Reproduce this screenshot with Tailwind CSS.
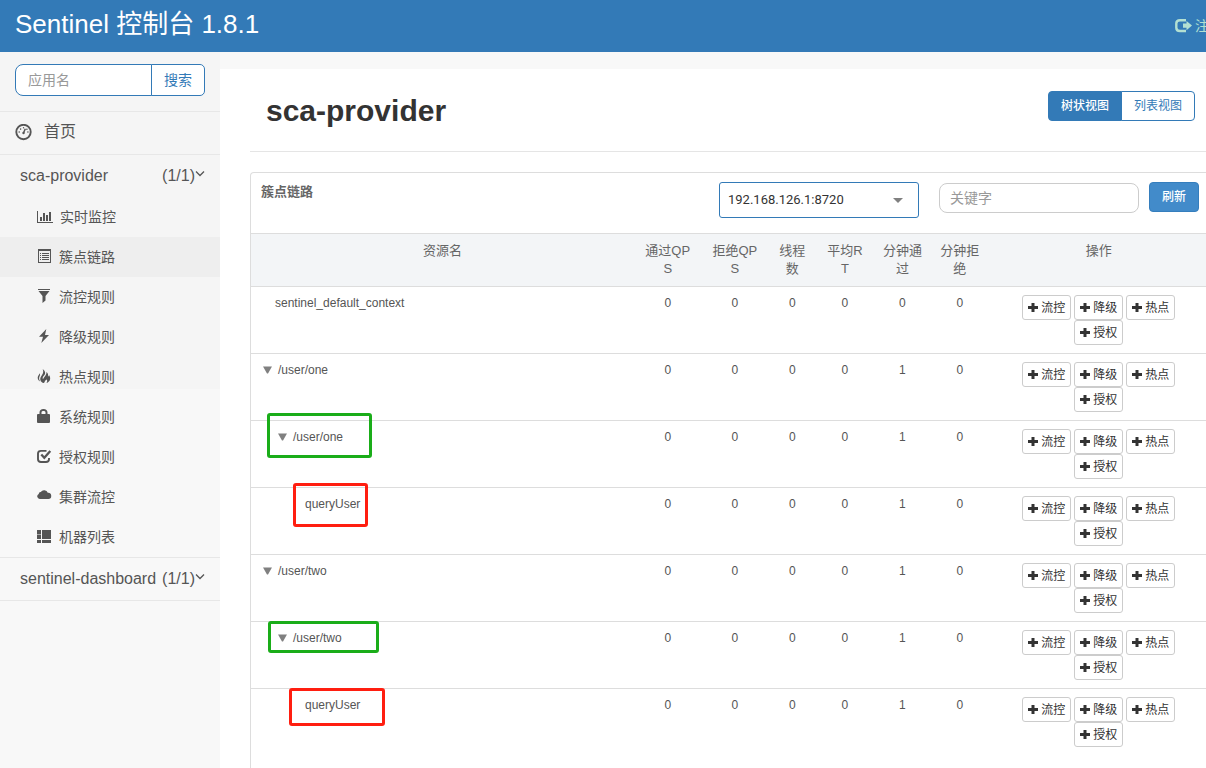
<!DOCTYPE html>
<html lang="zh-CN">
<head>
<meta charset="utf-8">
<title>Sentinel 控制台</title>
<script src="https://cdn.jsdelivr.net/npm/@tailwindcss/browser@4"></script>
</head>
<body class="bg-[#f8f8f8] font-['Liberation_Sans','Noto_Sans_CJK_SC',sans-serif] text-[#555]">
<svg class="hidden">
  <symbol id="plus" viewBox="0 0 10 12"><path d="M3.500 1h3v3H10v3H6.500v3h-3V7H0V4h3.500z" fill="currentColor"/></symbol>
  <symbol id="tri" viewBox="0 0 9 8"><path d="M0 0.500h9L5 7.500H4z" fill="currentColor"/></symbol>
  <symbol id="down" viewBox="0 0 10 10"><path d="M1 2.500l4 4 4-4" fill="none" stroke="currentColor" stroke-width="1.300"/></symbol>
</svg>
<div class="h-screen overflow-hidden">
<div class="flex min-h-full min-w-[1240px] flex-col">

  <header class="flex h-[52px] items-center justify-between bg-[#337ab7] pr-[17px] pl-[15px]">
    <a href="#" class="pb-1 text-[26px] leading-10 text-white">Sentinel 控制台 1.8.1</a>
    <a href="#" class="flex items-center gap-[3px] text-sm text-[#b3e0d2]">
      <svg class="h-4 w-[17px]" viewBox="0 0 17 16" fill="none" stroke="currentColor"><path d="M11 2.200H5Q1.300 2.200 1.300 5.500v4.200Q1.300 13 5 13h6" stroke-width="2.400"/><path d="M8 5.500h3.500V3L17 7.600l-5.500 4.700V9.700H8z" fill="currentColor" stroke="none"/></svg>
      <span>注销</span>
    </a>
  </header>

  <div class="flex flex-1">
    <aside class="w-[220px] shrink-0 bg-[linear-gradient(#f5f5f5,#f5f5f5)] bg-[length:100%_337px] bg-no-repeat">
      <form class="flex border-b border-[#e7e7e7] px-[15px] pt-3 pb-[15px]">
        <input aria-label="应用名" placeholder="应用名" class="h-8 min-w-0 flex-1 rounded-l-lg border border-[#337ab7] bg-white px-3 text-sm outline-none placeholder:text-[#999]">
        <button type="button" class="-ml-px h-8 w-[54px] rounded-r-[5px] border border-[#337ab7] bg-white text-sm text-[#337ab7]">搜索</button>
      </form>
      <nav>
        <a href="#" class="flex h-[43px] items-center gap-3 border-b border-[#e7e7e7] px-[15px] pb-0.5 text-base">
          <svg class="h-[17px] w-[17px]" viewBox="0 0 17 17" fill="none" stroke="currentColor"><circle cx="8.500" cy="8" r="7.200" stroke-width="1.900"/><path d="M8.500 9L10.300 4.800" stroke-width="1.500"/><g fill="currentColor" stroke="none"><circle cx="8.500" cy="9" r="1.200"/><circle cx="4.200" cy="8" r=".8"/><circle cx="5.600" cy="5.100" r=".8"/><circle cx="8.500" cy="3.800" r=".7"/><circle cx="11.900" cy="5.300" r=".8"/><circle cx="12.900" cy="8" r=".8"/></g></svg>
          <span>首页</span>
        </a>
        <a href="#" class="flex h-[42px] items-center pr-[15px] pl-5 text-base">
          <span class="flex-1">sca-provider</span><span>(1/1)</span>
          <svg class="mb-1 h-2.5 w-2.5"><use href="#down"/></svg>
        </a>
        <ul class="border-b border-[#e7e7e7] text-sm">
          <li><a href="#" class="flex h-10 items-center gap-1.5 pl-[37px]">
            <svg class="h-4 w-[17px]" viewBox="0 0 17 16" fill="currentColor"><path d="M0 2h1v11h15v1H0zM3 8h2v4H3zM6 4h2v8H6zM9 6h2v6H9zM12 3h2v9h-2z"/></svg>
            <span>实时监控</span></a></li>
          <li><a href="#" class="flex h-10 items-center gap-1.5 bg-[#eee] pl-[37px]">
            <svg class="h-4 w-4" viewBox="0 0 16 16" fill="currentColor"><path fill-rule="evenodd" d="M1 0h13v14H1zM2 2v11h11V2z"/><path d="M3 4h1v1H3zM5 4h7v1H5zM3 6h1v1H3zM5 6h7v1H5zM3 8h1v1H3zM5 8h7v1H5zM3 10h1v1H3zM5 10h7v1H5z"/></svg>
            <span>簇点链路</span></a></li>
          <li><a href="#" class="flex h-10 items-center gap-1.5 pl-[37px]">
            <svg class="h-4 w-4" viewBox="0 0 16 16" fill="currentColor"><path d="M1 0h12v1H1zM1.500 2h11L8.500 7v4.500L5.500 14V7z"/></svg>
            <span>流控规则</span></a></li>
          <li><a href="#" class="flex h-10 items-center gap-1.5 pl-[37px]">
            <svg class="h-4 w-4" viewBox="0 0 16 16" fill="currentColor"><path d="M9.300 0L2 7.700h4L4.300 14 12 6H8z"/></svg>
            <span>降级规则</span></a></li>
          <li><a href="#" class="flex h-10 items-center gap-1.5 pl-[37px]">
            <svg class="h-4 w-4" viewBox="0 0 16 16" fill="currentColor"><path d="M5.700 0C8.800 2.500 8.600 4.800 7 6.600 5.700 8.100 5.300 9 6 10.200c.4-.9.900-1.300 1.400-2.100 1-1.400 2.400-3 2-5.100 1.700 1.300 2 2.700 1.500 4.500.8-.3 1-.8 1-1.600C14.200 8.800 13.500 12.500 9.500 14c.8-1.300.9-2.500.2-3.800-.4.900-1 1.200-1.700 1.200 0 1-.4 1.800-1.200 2.600C3.300 13.200 2.300 9.800 4.200 7.200 5.800 5 7 3 5.700 0zM2.700 4.300c.7 1.300.2 2.300-.3 3.500C1.800 9.400 2.200 11 3.200 12.600 1 11.400.2 9.300 1 7.300 1.500 6.100 2.400 5.600 2.700 4.300z"/></svg>
            <span>热点规则</span></a></li>
          <li><a href="#" class="flex h-10 items-center gap-1.5 pl-[37px]">
            <svg class="h-4 w-4" viewBox="0 0 16 16" fill="currentColor"><path fill-rule="evenodd" d="M2.500 5V3.500C2.500 1.200 4 0 6.500 0S10.500 1.200 10.500 3.500V5H12q1 0 1 1v7q0 1-1 1H1q-1 0-1-1V6q0-1 1-1zM4.500 5h4V3.500C8.500 2.500 7.800 2 6.500 2s-2 .5-2 1.500z"/></svg>
            <span>系统规则</span></a></li>
          <li><a href="#" class="flex h-10 items-center gap-1.5 pl-[37px]">
            <svg class="h-4 w-4" viewBox="0 0 16 16" fill="none" stroke="currentColor"><path d="M9.500 1.900H4Q1 1.900 1 4.500v5.800Q1 13 4 13h5q3 0 3-2.700V9" stroke-width="1.900"/><path d="M4.300 5.500l3 3.200L13.300 2" stroke-width="2.300"/></svg>
            <span>授权规则</span></a></li>
          <li><a href="#" class="flex h-10 items-center gap-1.5 pl-[37px]">
            <svg class="h-4 w-4" viewBox="0 0 16 16" fill="currentColor"><path d="M2.700 10A2.700 2.700 0 0 1 1.700 4.900 2 2 0 0 1 3.800 3 4 4 0 0 1 10.800 3.800 3.100 3.100 0 0 1 11.400 10z"/></svg>
            <span>集群流控</span></a></li>
          <li><a href="#" class="flex h-10 items-center gap-1.5 pl-[37px]">
            <svg class="h-4 w-4" viewBox="0 0 16 16" fill="currentColor"><path d="M0 1h4v4H0zM0 5.500h4V10H0zM5 1h9v9H5zM0 11h4v3H0zM5 11h9v3H5z"/></svg>
            <span>机器列表</span></a></li>
        </ul>
        <a href="#" class="flex h-[43px] items-center border-b border-[#e7e7e7] pr-[15px] pl-5 text-base">
          <span class="flex-1">sentinel-dashboard</span><span>(1/1)</span>
          <svg class="mb-1 h-2.5 w-2.5"><use href="#down"/></svg>
        </a>
      </nav>
    </aside>

    <main class="mt-[17px] flex min-w-0 flex-1 flex-col bg-white px-[30px]">
      <div class="flex h-[83px] items-start justify-between border-b border-[#e5e5e5] pt-[22px] pr-[15px] pl-4">
        <h1 class="text-3xl leading-10 font-bold text-[#333]">sca-provider</h1>
        <div class="flex text-xs">
          <button class="h-[30px] w-[74px] rounded-l border border-[#337ab7] bg-[#337ab7] font-medium text-white">树状视图</button>
          <button class="-ml-px h-[30px] w-[74px] rounded-r border border-[#337ab7] bg-white text-[#337ab7]">列表视图</button>
        </div>
      </div>

      <section class="mt-5 flex-1 rounded-t border border-b-0 border-[#ddd]">
        <div class="flex h-[60px] items-start px-2.5 pt-[9px]">
          <h2 class="flex-1 text-[13px] leading-5 font-bold text-[#666]">簇点链路</h2>
          <div class="relative w-[200px]">
            <select aria-label="机器" class="h-9 w-full appearance-none rounded-[3px] border border-[#337ab7] bg-white px-2 font-[Roboto,sans-serif] text-[13px] text-[#333] outline-none"><option>192.168.126.1:8720</option></select>
            <svg class="pointer-events-none absolute top-4 right-4 h-[5px] w-2.5" viewBox="0 0 10 5"><path d="M0 0h10L5 5z" fill="#808080"/></svg>
          </div>
          <input aria-label="关键字" placeholder="关键字" class="mt-px ml-5 h-[30px] w-[200px] rounded-lg border border-[#ccc] px-2.5 text-sm outline-none placeholder:text-[#999]">
          <button class="ml-2.5 h-[30px] w-[50px] rounded border border-[#357ebd] bg-[#428bca] text-xs font-medium text-white">刷新</button>
        </div>

        <table class="w-full table-fixed border-t border-[#ddd] text-center text-xs text-[#555]">
          <colgroup><col class="w-[40%]"><col class="w-[7%]"><col class="w-[7%]"><col class="w-[5%]"><col class="w-[6%]"><col class="w-[6%]"><col class="w-[6%]"><col class="w-[23%]"></colgroup>
          <thead class="bg-[#f3f5f7] text-[13px] leading-[18px] break-all text-[#666]">
            <tr class="border-b border-[#ddd] align-top">
              <th class="p-2 font-normal">资源名</th><th class="p-2 font-normal">通过QPS</th><th class="p-2 font-normal">拒绝QPS</th><th class="p-2 font-normal">线程数</th><th class="p-2 font-normal">平均RT</th><th class="p-2 font-normal">分钟通过</th><th class="p-2 font-normal">分钟拒绝</th><th class="p-2 font-normal">操作</th>
            </tr>
          </thead>
          <tbody class="align-top leading-4">
            <tr class="border-b border-[#ddd]">
              <td class="py-2 pl-6 text-left">sentinel_default_context</td>
              <td class="py-2">0</td><td class="py-2">0</td><td class="py-2">0</td><td class="py-2">0</td><td class="py-2">0</td><td class="py-2">0</td>
              <td class="p-2"><div class="flex flex-wrap justify-center gap-x-[3px] text-[#333]">
                <button class="flex h-[25px] w-[49px] items-center justify-center gap-[3px] rounded-[3px] border border-[#ccc] bg-white"><svg class="h-3 w-2.5"><use href="#plus"/></svg>流控</button>
                <button class="flex h-[25px] w-[49px] items-center justify-center gap-[3px] rounded-[3px] border border-[#ccc] bg-white"><svg class="h-3 w-2.5"><use href="#plus"/></svg>降级</button>
                <button class="flex h-[25px] w-[49px] items-center justify-center gap-[3px] rounded-[3px] border border-[#ccc] bg-white"><svg class="h-3 w-2.5"><use href="#plus"/></svg>热点</button>
                <button class="flex h-[25px] w-[49px] items-center justify-center gap-[3px] rounded-[3px] border border-[#ccc] bg-white"><svg class="h-3 w-2.5"><use href="#plus"/></svg>授权</button>
              </div></td>
            </tr>
            <tr class="border-b border-[#ddd]">
              <td class="py-2 pl-3 text-left"><span class="flex items-center gap-1.5"><svg class="h-2 w-[9px] text-[#808080]"><use href="#tri"/></svg>/user/one</span></td>
              <td class="py-2">0</td><td class="py-2">0</td><td class="py-2">0</td><td class="py-2">0</td><td class="py-2">1</td><td class="py-2">0</td>
              <td class="p-2"><div class="flex flex-wrap justify-center gap-x-[3px] text-[#333]">
                <button class="flex h-[25px] w-[49px] items-center justify-center gap-[3px] rounded-[3px] border border-[#ccc] bg-white"><svg class="h-3 w-2.5"><use href="#plus"/></svg>流控</button>
                <button class="flex h-[25px] w-[49px] items-center justify-center gap-[3px] rounded-[3px] border border-[#ccc] bg-white"><svg class="h-3 w-2.5"><use href="#plus"/></svg>降级</button>
                <button class="flex h-[25px] w-[49px] items-center justify-center gap-[3px] rounded-[3px] border border-[#ccc] bg-white"><svg class="h-3 w-2.5"><use href="#plus"/></svg>热点</button>
                <button class="flex h-[25px] w-[49px] items-center justify-center gap-[3px] rounded-[3px] border border-[#ccc] bg-white"><svg class="h-3 w-2.5"><use href="#plus"/></svg>授权</button>
              </div></td>
            </tr>
            <tr class="border-b border-[#ddd]">
              <td class="relative py-2 pl-[27px] text-left"><span class="flex items-center gap-1.5"><svg class="h-2 w-[9px] text-[#808080]"><use href="#tri"/></svg>/user/one</span><div class="absolute -top-2 left-4 h-[45px] w-[105px] rounded-[3px] border-3 border-[#1aad19]"></div></td>
              <td class="py-2">0</td><td class="py-2">0</td><td class="py-2">0</td><td class="py-2">0</td><td class="py-2">1</td><td class="py-2">0</td>
              <td class="p-2"><div class="flex flex-wrap justify-center gap-x-[3px] text-[#333]">
                <button class="flex h-[25px] w-[49px] items-center justify-center gap-[3px] rounded-[3px] border border-[#ccc] bg-white"><svg class="h-3 w-2.5"><use href="#plus"/></svg>流控</button>
                <button class="flex h-[25px] w-[49px] items-center justify-center gap-[3px] rounded-[3px] border border-[#ccc] bg-white"><svg class="h-3 w-2.5"><use href="#plus"/></svg>降级</button>
                <button class="flex h-[25px] w-[49px] items-center justify-center gap-[3px] rounded-[3px] border border-[#ccc] bg-white"><svg class="h-3 w-2.5"><use href="#plus"/></svg>热点</button>
                <button class="flex h-[25px] w-[49px] items-center justify-center gap-[3px] rounded-[3px] border border-[#ccc] bg-white"><svg class="h-3 w-2.5"><use href="#plus"/></svg>授权</button>
              </div></td>
            </tr>
            <tr class="border-b border-[#ddd]">
              <td class="relative py-2 pl-[54px] text-left">queryUser<div class="absolute -top-[5px] left-[42px] h-11 w-[75px] rounded-[3px] border-3 border-[#ff1e10]"></div></td>
              <td class="py-2">0</td><td class="py-2">0</td><td class="py-2">0</td><td class="py-2">0</td><td class="py-2">1</td><td class="py-2">0</td>
              <td class="p-2"><div class="flex flex-wrap justify-center gap-x-[3px] text-[#333]">
                <button class="flex h-[25px] w-[49px] items-center justify-center gap-[3px] rounded-[3px] border border-[#ccc] bg-white"><svg class="h-3 w-2.5"><use href="#plus"/></svg>流控</button>
                <button class="flex h-[25px] w-[49px] items-center justify-center gap-[3px] rounded-[3px] border border-[#ccc] bg-white"><svg class="h-3 w-2.5"><use href="#plus"/></svg>降级</button>
                <button class="flex h-[25px] w-[49px] items-center justify-center gap-[3px] rounded-[3px] border border-[#ccc] bg-white"><svg class="h-3 w-2.5"><use href="#plus"/></svg>热点</button>
                <button class="flex h-[25px] w-[49px] items-center justify-center gap-[3px] rounded-[3px] border border-[#ccc] bg-white"><svg class="h-3 w-2.5"><use href="#plus"/></svg>授权</button>
              </div></td>
            </tr>
            <tr class="border-b border-[#ddd]">
              <td class="py-2 pl-3 text-left"><span class="flex items-center gap-1.5"><svg class="h-2 w-[9px] text-[#808080]"><use href="#tri"/></svg>/user/two</span></td>
              <td class="py-2">0</td><td class="py-2">0</td><td class="py-2">0</td><td class="py-2">0</td><td class="py-2">1</td><td class="py-2">0</td>
              <td class="p-2"><div class="flex flex-wrap justify-center gap-x-[3px] text-[#333]">
                <button class="flex h-[25px] w-[49px] items-center justify-center gap-[3px] rounded-[3px] border border-[#ccc] bg-white"><svg class="h-3 w-2.5"><use href="#plus"/></svg>流控</button>
                <button class="flex h-[25px] w-[49px] items-center justify-center gap-[3px] rounded-[3px] border border-[#ccc] bg-white"><svg class="h-3 w-2.5"><use href="#plus"/></svg>降级</button>
                <button class="flex h-[25px] w-[49px] items-center justify-center gap-[3px] rounded-[3px] border border-[#ccc] bg-white"><svg class="h-3 w-2.5"><use href="#plus"/></svg>热点</button>
                <button class="flex h-[25px] w-[49px] items-center justify-center gap-[3px] rounded-[3px] border border-[#ccc] bg-white"><svg class="h-3 w-2.5"><use href="#plus"/></svg>授权</button>
              </div></td>
            </tr>
            <tr class="border-b border-[#ddd]">
              <td class="relative py-2 pl-[27px] text-left"><span class="flex items-center gap-1.5"><svg class="h-2 w-[9px] text-[#808080]"><use href="#tri"/></svg>/user/two</span><div class="absolute -top-px left-[17px] h-8 w-[111px] rounded-[3px] border-3 border-[#1aad19]"></div></td>
              <td class="py-2">0</td><td class="py-2">0</td><td class="py-2">0</td><td class="py-2">0</td><td class="py-2">1</td><td class="py-2">0</td>
              <td class="p-2"><div class="flex flex-wrap justify-center gap-x-[3px] text-[#333]">
                <button class="flex h-[25px] w-[49px] items-center justify-center gap-[3px] rounded-[3px] border border-[#ccc] bg-white"><svg class="h-3 w-2.5"><use href="#plus"/></svg>流控</button>
                <button class="flex h-[25px] w-[49px] items-center justify-center gap-[3px] rounded-[3px] border border-[#ccc] bg-white"><svg class="h-3 w-2.5"><use href="#plus"/></svg>降级</button>
                <button class="flex h-[25px] w-[49px] items-center justify-center gap-[3px] rounded-[3px] border border-[#ccc] bg-white"><svg class="h-3 w-2.5"><use href="#plus"/></svg>热点</button>
                <button class="flex h-[25px] w-[49px] items-center justify-center gap-[3px] rounded-[3px] border border-[#ccc] bg-white"><svg class="h-3 w-2.5"><use href="#plus"/></svg>授权</button>
              </div></td>
            </tr>
            <tr>
              <td class="relative py-2 pl-[54px] text-left">queryUser<div class="absolute -top-px left-[38px] h-[38px] w-24 rounded-[3px] border-3 border-[#ff1e10]"></div></td>
              <td class="py-2">0</td><td class="py-2">0</td><td class="py-2">0</td><td class="py-2">0</td><td class="py-2">1</td><td class="py-2">0</td>
              <td class="p-2"><div class="flex flex-wrap justify-center gap-x-[3px] text-[#333]">
                <button class="flex h-[25px] w-[49px] items-center justify-center gap-[3px] rounded-[3px] border border-[#ccc] bg-white"><svg class="h-3 w-2.5"><use href="#plus"/></svg>流控</button>
                <button class="flex h-[25px] w-[49px] items-center justify-center gap-[3px] rounded-[3px] border border-[#ccc] bg-white"><svg class="h-3 w-2.5"><use href="#plus"/></svg>降级</button>
                <button class="flex h-[25px] w-[49px] items-center justify-center gap-[3px] rounded-[3px] border border-[#ccc] bg-white"><svg class="h-3 w-2.5"><use href="#plus"/></svg>热点</button>
                <button class="flex h-[25px] w-[49px] items-center justify-center gap-[3px] rounded-[3px] border border-[#ccc] bg-white"><svg class="h-3 w-2.5"><use href="#plus"/></svg>授权</button>
              </div></td>
            </tr>
          </tbody>
        </table>
      </section>
    </main>
  </div>
</div>
</div>
</body>
</html>
